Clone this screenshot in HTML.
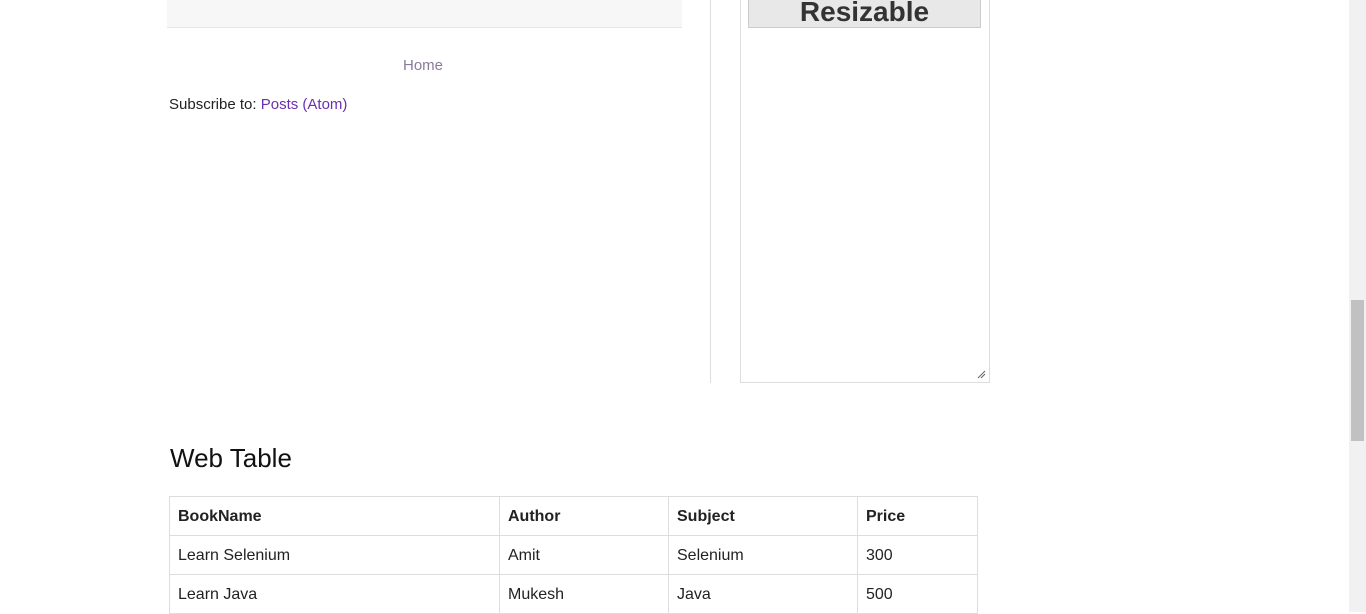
<!DOCTYPE html>
<html><head><style>
body{margin:0;width:1366px;height:612px;overflow:hidden;position:relative;background:#fff;font-family:"Liberation Sans",Arial,sans-serif}
.a{position:absolute}
table{border-collapse:collapse;position:absolute;left:169px;top:496px;width:809px;font-size:16px;color:#222}
td,th{border:1px solid #ddd;height:39px;padding:1px 8px 0;text-align:left;box-sizing:border-box}
th{font-weight:bold}
</style></head><body>
<div class="a" style="left:167px;top:0;width:515px;height:27px;background:#f7f7f7;border-bottom:1px solid #e6e6e6"></div>
<div class="a" style="left:403px;top:57px;font-size:15px;color:#8a7a9a">Home</div>
<div class="a" style="left:169px;top:96px;font-size:15px;color:#222">Subscribe to: <span style="color:#6b2fb0">Posts (Atom)</span></div>
<div class="a" style="left:710px;top:0;width:1px;height:383px;background:#ddd"></div>
<div class="a" style="left:740px;top:-1px;width:248px;height:383px;border:1px solid #ddd;border-top:none"></div>
<div class="a" style="left:748px;top:-1px;width:231px;height:27px;background:#e8e8e8;border:1px solid #ccc;text-align:center;font-weight:bold;font-size:28px;line-height:24px;color:#333;overflow:hidden">Resizable</div>
<svg class="a" style="left:976px;top:369px" width="10" height="10"><path d="M2 9L9 2M5 9L9 5" stroke="#666" stroke-width="1"/></svg>
<div class="a" style="left:170px;top:443px;font-size:26px;color:#111">Web Table</div>
<table>
<tr><th style="width:330px">BookName</th><th style="width:169px">Author</th><th style="width:189px">Subject</th><th>Price</th></tr>
<tr><td>Learn Selenium</td><td>Amit</td><td>Selenium</td><td>300</td></tr>
<tr><td>Learn Java</td><td>Mukesh</td><td>Java</td><td>500</td></tr>
</table>
<div class="a" style="left:1349px;top:0;width:17px;height:612px;background:#f1f1f1"></div>
<div class="a" style="left:1351px;top:300px;width:13px;height:141px;background:#c1c1c1"></div>
</body></html>
